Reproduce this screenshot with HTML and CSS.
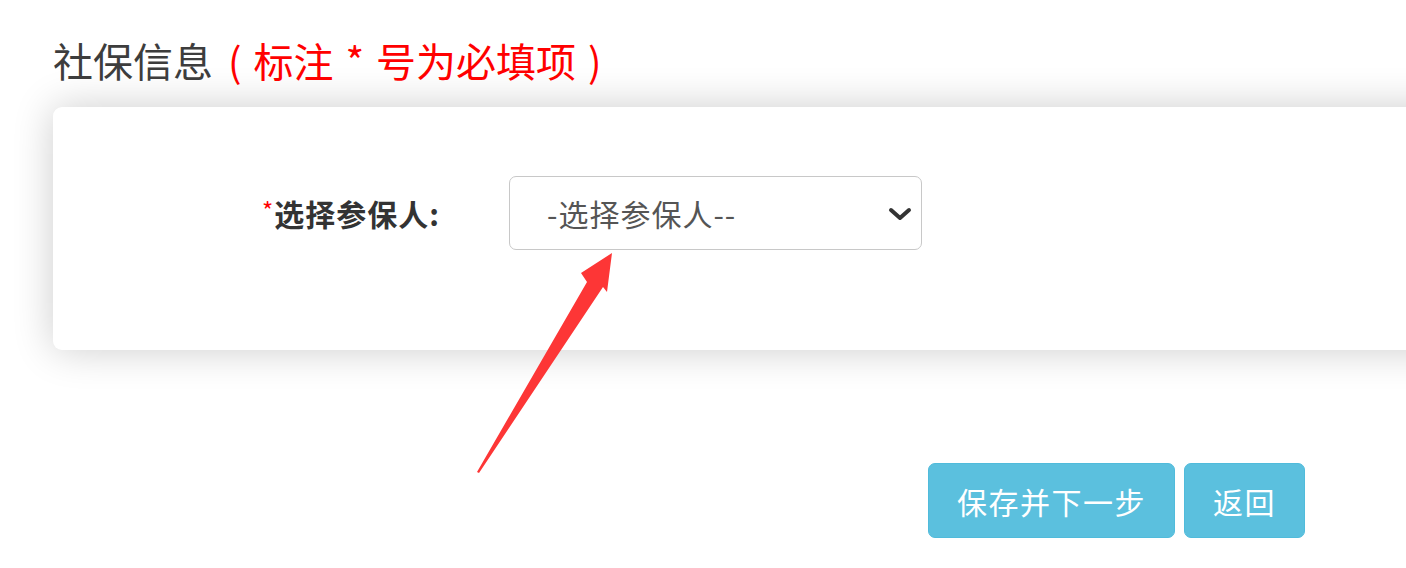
FILE: index.html
```html
<!DOCTYPE html>
<html lang="zh-CN">
<head>
<meta charset="utf-8">
<title>社保信息</title>
<link rel="stylesheet" href="styles.css">
</head>
<body>
<div class="page">
  <h2 class="title">社保信息<span class="note">( 标注 * 号为必填项 )</span></h2>
  <div class="card">
    <div class="form-row">
      <label class="label" for="person"><span class="req">*</span>选择参保人:</label>
      <div class="select-wrap">
        <select id="person" class="select">
          <option>-选择参保人--</option>
        </select>
        <svg class="chev" width="24" height="14" viewBox="0 0 24 14"><path d="M3 3 L12 11 L21 3" fill="none" stroke="#333" stroke-width="4" stroke-linecap="round" stroke-linejoin="round"/></svg>
      </div>
    </div>
  </div>
  <div class="actions">
    <button class="btn">保存并下一步</button>
    <button class="btn">返回</button>
  </div>
  <svg class="arrow" width="1406" height="568" viewBox="0 0 1406 568"><polygon points="477,472 587,282 581,273 612,253 607,292 603,287 479,473" fill="#fd3636"/></svg>
</div>
</body>
</html>
```

FILE: styles.css
```css
html, body {
  margin: 0;
  padding: 0;
  background: #fff;
  overflow: hidden;
}
body {
  font-family: "Noto Sans CJK SC", "Noto Sans", sans-serif;
  width: 1406px;
  height: 568px;
}
.page {
  position: relative;
  padding: 34px 0 0 53px;
  height: 568px;
  box-sizing: border-box;
}
.title {
  margin: 0;
  font-size: 40px;
  font-weight: normal;
  line-height: 52px;
  color: #3d3d3d;
}
.note {
  color: #ff0000;
  margin-left: 15px;
  word-spacing: 3px;
}
.card {
  margin-top: 21px;
  width: 1420px;
  height: 243px;
  box-sizing: border-box;
  background: #fff;
  border-radius: 9px;
  box-shadow: 0 0 40px rgba(0, 0, 0, 0.2);
  padding-top: 69px;
}
.form-row {
  display: flex;
  align-items: center;
}
.label {
  width: 387px;
  text-align: right;
  font-size: 30px;
  font-weight: bold;
  color: #333;
  margin-right: 69px;
  letter-spacing: 1px;
}
.req {
  color: #ff0000;
  font-size: 24px;
  vertical-align: 6px;
  font-weight: normal;
  letter-spacing: 0;
  margin-right: 1px;
}
.select-wrap {
  position: relative;
  width: 413px;
  height: 74px;
}
.select {
  appearance: none;
  -webkit-appearance: none;
  width: 100%;
  height: 100%;
  box-sizing: border-box;
  border: 1.5px solid #c8c8c8;
  border-radius: 7px;
  background: #fff;
  font-family: "Noto Sans CJK SC", "Noto Sans", sans-serif;
  font-size: 30px;
  letter-spacing: 1px;
  color: #555;
  padding: 0 0 0 37px;
  outline: none;
}
.chev {
  position: absolute;
  right: 10px;
  top: 31px;
  pointer-events: none;
}
.actions {
  display: flex;
  justify-content: flex-end;
  gap: 9px;
  margin-top: 113px;
  margin-right: 101px;
}
.btn {
  height: 75px;
  padding: 0 28px;
  border: 1px solid #50bbdb;
  border-radius: 7px;
  background: #5bc0de;
  color: #fff;
  font-family: "Noto Sans CJK SC", "Noto Sans", sans-serif;
  font-size: 30px;
  letter-spacing: 1.5px;
}
.arrow {
  position: absolute;
  left: 0;
  top: 0;
  pointer-events: none;
}
```
